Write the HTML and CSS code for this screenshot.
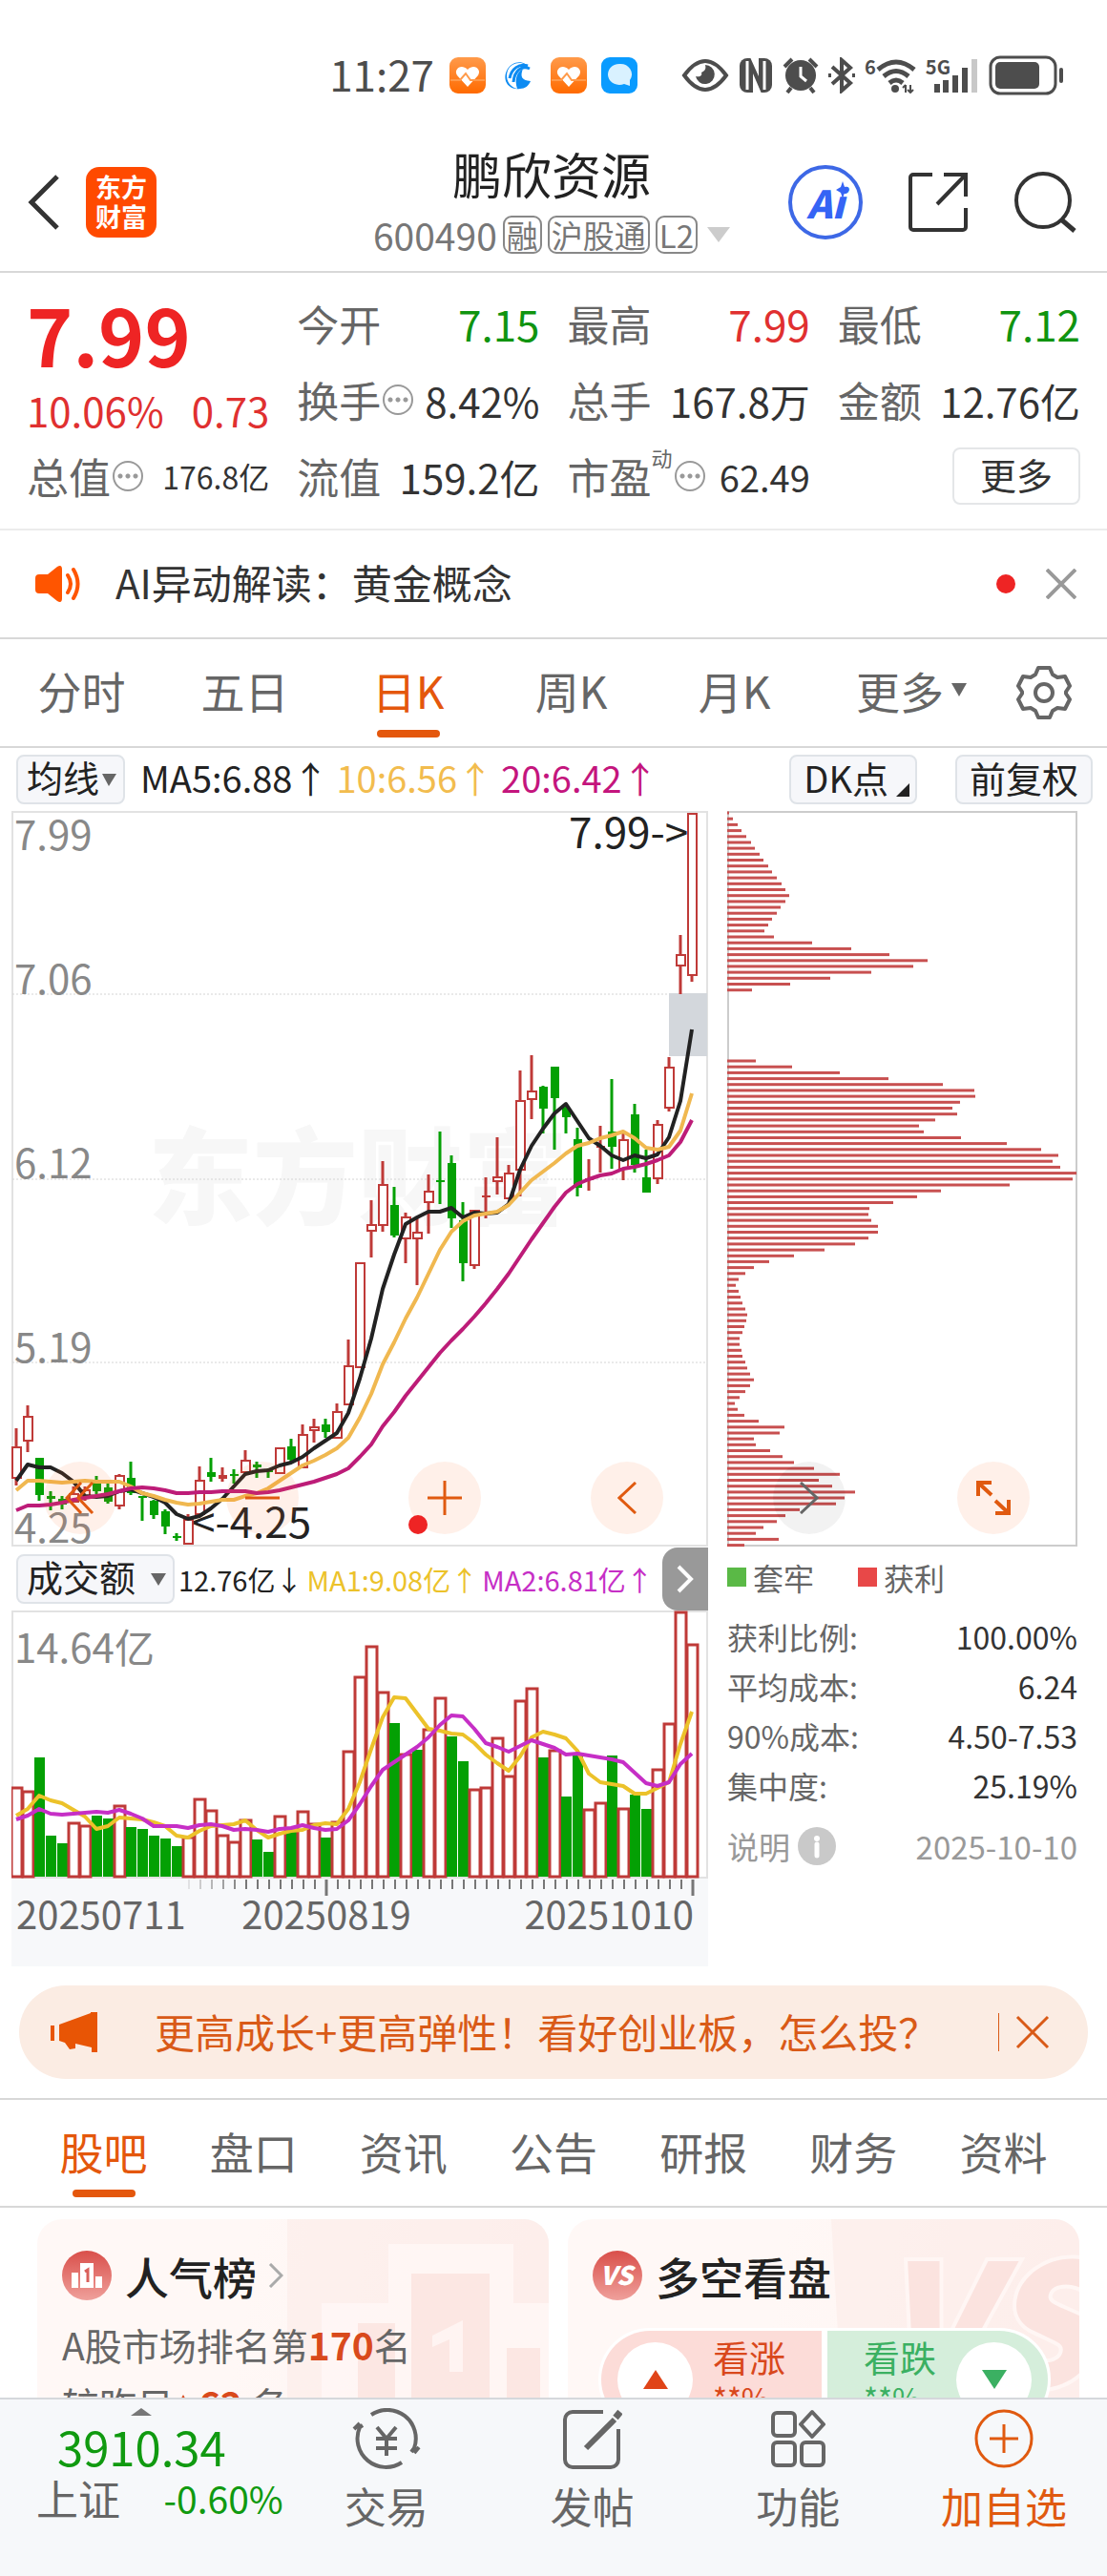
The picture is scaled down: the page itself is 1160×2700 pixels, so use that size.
FILE: index.html
```html
<!DOCTYPE html>
<html lang="zh-CN">
<head>
    <meta charset="UTF-8">
    <meta name="viewport" content="width=device-width, initial-scale=1.0">
    <title>鹏欣资源 600490</title>
    <link rel="stylesheet" href="styles.css">
</head>
<body>
<div class="app">
    <!-- Status bar -->
    <div class="status-bar">
        <span class="clock">11:27</span>
        <div class="status-apps">
            <svg width="38" height="38" viewBox="0 0 38 38">
                <defs><linearGradient id="orangeApp" x1="0" y1="0" x2="0" y2="1"><stop offset="0" stop-color="#ff9a4a"/><stop offset="1" stop-color="#ff6a00"/></linearGradient></defs>
                <rect width="38" height="38" rx="9" fill="url(#orangeApp)"/>
                <path d="M19 31 8 19c-4-6 4-13 11-6 7-7 15 0 11 6z" fill="#fff"/>
                <path d="M1 24h10l6-7 5 7h15" fill="none" stroke="#ff9a4a" stroke-width="2"/>
            </svg>
            <svg width="38" height="38" viewBox="0 0 38 38">
                <path d="M31 13C27 3 12 4 8 14c-3 8 1 17 10 19-3-9-1-17 6-21-3 8-2 12 8 13-2 5-6 8-11 8C9 35 2 24 7 14 12 3 27 2 31 13z" fill="#0d8bf2"/>
                <path d="M31 12c-8-4-16 2-17 14M29 9C20 6 12 12 10 22" fill="none" stroke="#0d8bf2" stroke-width="3"/>
            </svg>
            <svg width="38" height="38" viewBox="0 0 38 38">
                <rect width="38" height="38" rx="9" fill="url(#orangeApp)"/>
                <path d="M19 31 8 19c-4-6 4-13 11-6 7-7 15 0 11 6z" fill="#fff"/>
                <path d="M1 24h10l6-7 5 7h15" fill="none" stroke="#ff9a4a" stroke-width="2"/>
            </svg>
            <svg width="38" height="38" viewBox="0 0 38 38">
                <rect width="38" height="38" rx="9" fill="#0a9bff"/>
                <path d="M19 7a12 11 0 0 1 11 17v6l-6-2A12 11 0 1 1 19 7z" fill="#d9f1ff"/>
            </svg>
        </div>
        <div class="status-icons">
            <svg width="50" height="38" viewBox="0 0 50 38">
                <path d="M3 19Q25-11 47 19 25 49 3 19z" fill="none" stroke="#4d4d4d" stroke-width="4"/>
                <path d="M25 8c1 4 0 6-4 8 1 3-1 5-6 4a10 10 0 1 0 10-12z" fill="#4d4d4d"/>
            </svg>
            <svg width="36" height="38" viewBox="0 0 36 38">
                <rect x="1" y="1" width="34" height="36" rx="8" fill="#4d4d4d"/>
                <path d="M9 34V4M27 4v30" stroke="#fff" stroke-width="3"/>
                <path d="M15 17v21h9zM12 0h9v20z" fill="#fff"/>
            </svg>
            <svg width="38" height="38" viewBox="0 0 38 38">
                <path d="M2 10 10 2M36 10 28 2M9 32l-4 5M29 32l4 5" stroke="#4d4d4d" stroke-width="4" fill="none"/>
                <circle cx="19" cy="19" r="16" fill="#4d4d4d"/>
                <path d="M19 10v10l6 5" stroke="#fff" stroke-width="3" fill="none"/>
            </svg>
            <svg width="28" height="38" viewBox="0 0 28 38">
                <path d="M4 10l19 17-9 8V3l9 8L4 28M0 19h3M25 19h3" fill="none" stroke="#4d4d4d" stroke-width="4"/>
            </svg>
            <div class="network">
                <sup>6</sup>
                <svg width="42" height="38" viewBox="0 0 42 38">
                    <path d="M2 13q19-16 38 0M8 20q13-11 26 0M14 27q7-6 14 0" fill="none" stroke="#4d4d4d" stroke-width="5"/>
                    <circle cx="20" cy="33" r="4" fill="#4d4d4d"/>
                    <path d="M31 29v8M28 32l3-3M36 29v8M33 34l3 3 3-3" stroke="#4d4d4d" stroke-width="2" fill="none"/>
                </svg>
            </div>
            <div class="network">
                <sup>5G</sup>
                <svg class="signal" width="48" height="38" viewBox="0 0 48 38">
                    <path d="M4 28v9M13 24v13M23 19v18M33 11v26" stroke="#4d4d4d" stroke-width="6"/>
                    <path d="M43 2v35" stroke="#c8c8c8" stroke-width="6"/>
                </svg>
            </div>
            <svg width="80" height="42" viewBox="0 0 80 42">
                <rect x="2" y="2" width="68" height="38" rx="10" fill="none" stroke="#4d4d4d" stroke-width="3"/>
                <rect x="7" y="7" width="46" height="28" rx="5" fill="#4d4d4d"/>
                <path d="M76 15v12" stroke="#4d4d4d" stroke-width="4" stroke-linecap="round"/>
            </svg>
        </div>
    </div>

    <!-- Header -->
    <header class="header">
        <div class="header-left">
            <button class="icon-btn" aria-label="返回">
                <svg width="36" height="60" viewBox="0 0 36 60"><path d="M32 3 5 30l27 27" fill="none" stroke="#333" stroke-width="5"/></svg>
            </button>
            <a class="logo" href="#">东方<br>财富</a>
        </div>
        <div class="stock">
            <h1>鹏欣资源</h1>
            <div class="stock-code">
                <span>600490</span>
                <span class="tag">融</span>
                <span class="tag">沪股通</span>
                <span class="tag">L2</span>
                <svg width="24" height="16" viewBox="0 0 24 16"><path d="M0 0h24L12 16z" fill="#ccc"/></svg>
            </div>
        </div>
        <div class="header-right">
            <button class="icon-btn ai-btn" aria-label="AI助手">
                <span>Ai</span>
                <svg class="spark" width="14" height="18" viewBox="0 0 14 18"><path d="M7 0l2 6 5 3-5 3-2 6-2-6-5-3 5-3z" fill="#3564f5"/></svg>
            </button>
            <button class="icon-btn" aria-label="分享">
                <svg width="64" height="64" viewBox="0 0 64 64"><path d="M26 3H6a3 3 0 0 0-3 3v52a3 3 0 0 0 3 3h52a3 3 0 0 0 3-3V38M38 3h23v23M61 3 31 34" fill="none" stroke="#333" stroke-width="4"/></svg>
            </button>
            <button class="icon-btn" aria-label="搜索">
                <svg width="66" height="66" viewBox="0 0 66 66"><circle cx="31" cy="31" r="28" fill="none" stroke="#333" stroke-width="4"/><path d="M50 51l14 12" stroke="#333" stroke-width="5"/></svg>
            </button>
        </div>
    </header>

    <!-- Quote -->
    <section class="quote">
        <div class="price-box">
            <div class="price">7.99</div>
            <div class="change"><span>10.06%</span><span>0.73</span></div>
        </div>
        <div class="cell"><span>今开</span><b class="green">7.15</b></div>
        <div class="cell"><span>最高</span><b class="red">7.99</b></div>
        <div class="cell"><span>最低</span><b class="green">7.12</b></div>
        <div class="cell"><span>换手<i class="dots"></i></span><b>8.42%</b></div>
        <div class="cell"><span>总手</span><b>167.8万</b></div>
        <div class="cell"><span>金额</span><b>12.76亿</b></div>
        <div class="cell"><span>总值<i class="dots"></i></span><b class="small">176.8亿</b></div>
        <div class="cell"><span>流值</span><b>159.2亿</b></div>
        <div class="cell"><span>市盈<sup>动</sup><i class="dots"></i></span><b class="mid">62.49</b></div>
        <div class="cell cell-end"><button class="more-btn">更多</button></div>
    </section>

    <!-- AI notice -->
    <div class="notice">
        <svg width="50" height="40" viewBox="0 0 50 40">
            <path d="M0 14q0-4 4-4h9L23 2q5-3 5 3v30q0 6-5 3l-10-8H4q-4 0-4-4z" fill="#ff5500"/>
            <path d="M34 11q6 9 0 18M40 5q9 15 0 30" fill="none" stroke="#ff5500" stroke-width="4" stroke-linecap="round"/>
        </svg>
        <span class="notice-text">AI异动解读：黄金概念</span>
        <i class="dot"></i>
        <button class="icon-btn" aria-label="关闭">
            <svg width="32" height="32" viewBox="0 0 32 32"><path d="M1 1l30 30M31 1 1 31" stroke="#999" stroke-width="4"/></svg>
        </button>
    </div>

    <!-- Period tabs -->
    <nav class="period-tabs">
        <a href="#">分时</a>
        <a href="#">五日</a>
        <a href="#" class="active">日K</a>
        <a href="#">周K</a>
        <a href="#">月K</a>
        <a href="#">更多<svg width="16" height="14" viewBox="0 0 16 14"><path d="M0 0h16L8 14z" fill="#666"/></svg></a>
        <button class="icon-btn" aria-label="设置">
            <svg width="58" height="58" viewBox="0 0 58 58">
                <path d="M23 3h12l3 7 5 3 8-1 5 10-4 6v2l4 6-5 10-8-1-5 3-3 7H23l-3-7-5-3-8 1L2 36l4-6v-2l-4-6L7 12l8 1 5-3z" fill="none" stroke="#666" stroke-width="4" stroke-linejoin="round"/>
                <circle cx="29" cy="29" r="9" fill="none" stroke="#666" stroke-width="4"/>
            </svg>
        </button>
    </nav>

    <!-- MA toolbar -->
    <div class="ma-bar">
        <div class="select-box">
            <select aria-label="主图指标"><option>均线</option></select>
            <svg width="15" height="13" viewBox="0 0 15 13"><path d="M0 0h15L7 13z" fill="#666"/></svg>
        </div>
        <span>MA5:6.88↑</span>
        <span class="yellow">10:6.56↑</span>
        <span class="magenta">20:6.42↑</span>
        <div class="ma-actions">
            <button class="tool-btn">DK点<svg width="14" height="14" viewBox="0 0 14 14"><path d="M14 0v14H0z" fill="#222"/></svg></button>
            <button class="tool-btn">前复权</button>
        </div>
    </div>

    <!-- Charts -->
    <div class="charts">
        <div class="chart-main">
            <div class="chart-wrap">
                <svg id="kline" viewBox="0 0 730 772"></svg>
                <div class="float-btns">
                    <button aria-label="最早"><svg width="32" height="34" viewBox="0 0 32 34"><path d="M17 1 2 17l15 16M29 1 14 17l15 16" fill="none" stroke="#e05a10" stroke-width="3"/></svg></button>
                    <button aria-label="缩小"><svg width="36" height="34" viewBox="0 0 36 34"><path d="M0 17h36" stroke="#e05a10" stroke-width="3"/></svg></button>
                    <button aria-label="放大" class="has-dot"><svg width="36" height="36" viewBox="0 0 36 36"><path d="M0 18h36M18 0v36" stroke="#e05a10" stroke-width="3"/></svg></button>
                    <button aria-label="向左"><svg width="20" height="34" viewBox="0 0 20 34"><path d="M19 1 2 17l17 16" fill="none" stroke="#e05a10" stroke-width="3"/></svg></button>
                </div>
            </div>
            <div class="vol-bar">
                <div class="select-box wide">
                    <select aria-label="副图指标"><option>成交额</option></select>
                    <svg width="16" height="13" viewBox="0 0 16 13"><path d="M0 0h16L8 13z" fill="#666"/></svg>
                </div>
                <span>12.76亿↓</span>
                <span class="gold">MA1:9.08亿↑</span>
                <span class="purple">MA2:6.81亿↑</span>
                <button class="fold-btn" aria-label="展开"><svg width="18" height="30" viewBox="0 0 18 30"><path d="M2 2l13 13L2 28" fill="none" stroke="#fff" stroke-width="4"/></svg></button>
            </div>
            <svg id="volume" viewBox="0 0 730 373"></svg>
        </div>
        <div class="chart-side">
            <div class="chart-wrap">
                <svg id="chips" viewBox="0 0 367 772"></svg>
                <div class="float-btns side">
                    <button aria-label="向右" class="gray"><svg width="20" height="34" viewBox="0 0 20 34"><path d="M1 1l17 16L1 33" fill="none" stroke="#666" stroke-width="3"/></svg></button>
                    <button aria-label="全屏"><svg width="38" height="38" viewBox="0 0 38 38"><path d="M17 3H3v14M3 3l14 13M21 35h14V21M35 35 21 22" fill="none" stroke="#e05a10" stroke-width="4"/></svg></button>
                </div>
            </div>
            <div class="legend">
                <span><i class="sq-green"></i>套牢</span>
                <span><i class="sq-red"></i>获利</span>
            </div>
            <dl class="chip-info">
                <div><dt>获利比例:</dt><dd>100.00%</dd></div>
                <div><dt>平均成本:</dt><dd>6.24</dd></div>
                <div><dt>90%成本:</dt><dd>4.50-7.53</dd></div>
                <div><dt>集中度:</dt><dd>25.19%</dd></div>
            </dl>
            <div class="chip-date">
                <a href="#">说明<svg width="40" height="40" viewBox="0 0 40 40"><circle cx="20" cy="20" r="20" fill="#c9c9c9"/><circle cx="20" cy="12" r="3" fill="#fff"/><path d="M20 18v12" stroke="#fff" stroke-width="5" stroke-linecap="round"/></svg></a>
                <time>2025-10-10</time>
            </div>
        </div>
    </div>

    <!-- Promo -->
    <div class="promo">
        <svg width="50" height="44" viewBox="0 0 50 44"><path d="M0 15h4v16H0zM9 14 42 2V1h7v42h-6v-5l-17-4v5l-6 1-5-7-6-2z" fill="#e85505"/></svg>
        <a href="#">更高成长+更高弹性！看好创业板，怎么投？</a>
        <button class="icon-btn" aria-label="关闭推广">
            <svg width="36" height="36" viewBox="0 0 36 36"><path d="M2 2l32 32M34 2 2 34" stroke="#d95a17" stroke-width="3"/></svg>
        </button>
    </div>

    <!-- Info tabs -->
    <nav class="info-tabs">
        <a href="#" class="active">股吧</a>
        <a href="#">盘口</a>
        <a href="#">资讯</a>
        <a href="#">公告</a>
        <a href="#">研报</a>
        <a href="#">财务</a>
        <a href="#">资料</a>
    </nav>

    <!-- Cards -->
    <div class="cards">
        <section class="card">
            <svg class="card-bg" viewBox="0 0 536 240" width="536" height="240">
                <path d="M262 0h274v240H262z" fill="#fce9e6" opacity=".5"/>
                <path d="M298 240V88h70V26h131v62h37v152z" fill="#fff8f6" opacity=".8"/>
                <path d="M336 109h39v131h-39zM392 57h82v183h-82zM492 135h35v105h-35z" fill="#fbe3df" opacity=".8"/>
                <path d="M414 122l32-16v54h-14v-34l-18 8z" fill="#fff4f2"/>
            </svg>
            <h2>
                <svg width="52" height="52" viewBox="0 0 52 52">
                    <defs><linearGradient id="redIcon" x1="0" y1="0" x2="0" y2="1"><stop offset="0" stop-color="#d94f4a"/><stop offset="1" stop-color="#efa09b"/></linearGradient></defs>
                    <circle cx="26" cy="26" r="26" fill="url(#redIcon)"/>
                    <path d="M10 23h7v16h-7zM19 13h14v26H19zM35 27h7v12h-7z" fill="#fff"/>
                    <path d="M24 22l3-2v13" fill="none" stroke="#d9605b" stroke-width="3"/>
                </svg>
                人气榜
                <svg width="16" height="26" viewBox="0 0 16 26"><path d="M2 1l12 12L2 25" fill="none" stroke="#aaa" stroke-width="3"/></svg>
            </h2>
            <p>A股市场排名第<strong>170</strong>名</p>
            <p>较昨日<strong><svg width="20" height="18" viewBox="0 0 20 18"><path d="M10 0l10 18H0z" fill="#d94a1c"/></svg>62</strong>&nbsp;名</p>
        </section>
        <section class="card">
            <svg class="card-bg" viewBox="0 0 536 240" width="536" height="240">
                <path d="M276 0h260v240H290z" fill="#fce9e6" opacity=".5"/>
                <text x="325" y="175" font-size="176" font-weight="900" font-style="italic" fill="#fbe3df" stroke="#fff6f4" stroke-width="8" paint-order="stroke">VS</text>
            </svg>
            <h2>
                <svg width="52" height="52" viewBox="0 0 52 52"><circle cx="26" cy="26" r="26" fill="url(#redIcon)"/><text x="25" y="36" text-anchor="middle" font-size="27" font-weight="900" font-style="italic" fill="#fff">VS</text></svg>
                多空看盘
            </h2>
            <div class="vote">
                <button class="vote-up">
                    <i><svg width="26" height="20" viewBox="0 0 26 20"><path d="M13 0l13 20H0z" fill="#e04418"/></svg></i>
                    <span>看涨<small>**%</small></span>
                </button>
                <button class="vote-down">
                    <span>看跌<small>**%</small></span>
                    <i><svg width="26" height="20" viewBox="0 0 26 20"><path d="M0 0h26L13 20z" fill="#3bb062"/></svg></i>
                </button>
            </div>
        </section>
    </div>

    <!-- Bottom bar -->
    <footer class="bottom-bar">
        <a class="index" href="#">
            <svg width="22" height="8" viewBox="0 0 22 8"><path d="M11 0l11 8H0z" fill="#777"/></svg>
            <span class="index-value">3910.34</span>
            <span class="index-row"><span>上证</span><em>-0.60%</em></span>
        </a>
        <a href="#">
            <svg width="72" height="64" viewBox="0 0 72 64" fill="none" stroke="#666" stroke-width="4">
                <path d="M20 7A30 30 0 0 1 65 42l-3 4M65 47l5-6M52 57A30 30 0 0 1 8 20l3-2M8 16l-6 6M26 20l10 12 10-12M25 32h22M25 42h22M36 32v18"/>
            </svg>
            交易
        </a>
        <a href="#">
            <svg width="64" height="64" viewBox="0 0 64 64" fill="none" stroke="#666" stroke-width="4">
                <path d="M44 4H12a8 8 0 0 0-8 8v42a8 8 0 0 0 8 8h40a8 8 0 0 0 8-8V22"/><path d="M26 42 56 12" stroke-width="6"/><path d="M57 10l5-6" stroke-width="7"/>
            </svg>
            发帖
        </a>
        <a href="#">
            <svg width="60" height="64" viewBox="0 0 60 64" fill="none" stroke="#666" stroke-width="4">
                <rect x="4" y="5" width="23" height="24" rx="4"/><rect x="4" y="36" width="23" height="24" rx="4"/><rect x="34" y="36" width="23" height="24" rx="4"/><path d="M45 4l12 13-12 13-12-13z" stroke-linejoin="round"/>
            </svg>
            功能
        </a>
        <a href="#" class="add">
            <svg width="64" height="64" viewBox="0 0 64 64" fill="none" stroke="#e05a10" stroke-width="3"><circle cx="32" cy="32" r="29"/><path d="M17 32h30M32 17v30"/></svg>
            加自选
        </a>
    </footer>
</div>
<script src="script.js"></script>
</body>
</html>
```
FILE: styles.css
```css
* {
    margin: 0;
    padding: 0;
    box-sizing: border-box;
}
body {
    font-family: "Noto Sans CJK SC", "Noto Sans", sans-serif;
    background-color: #fff;
    color: #333;
}
a {
    color: inherit;
    text-decoration: none;
}
button, select {
    font: inherit;
    color: inherit;
    background: none;
    border: none;
    cursor: pointer;
}
svg {
    display: block;
    flex: none;
}
i, em {
    font-style: normal;
}
.app {
    height: 100vh;
    display: flex;
    flex-direction: column;
    overflow: hidden;
}
.app > * {
    flex: none;
}
.icon-btn {
    display: flex;
    align-items: center;
    justify-content: center;
}

/* Status bar */
.status-bar {
    display: flex;
    align-items: center;
    justify-content: flex-end;
    padding: 46px 44px 0 0;
    height: 112px;
    color: #4d4d4d;
}
.clock {
    font-size: 44px;
    line-height: 62px;
    padding-bottom: 4px;
    margin-right: 16px;
}
.status-apps {
    display: flex;
    gap: 15px;
    margin-right: 46px;
}
.status-icons {
    display: flex;
    align-items: center;
    gap: 10px;
}
.network {
    display: flex;
    align-items: flex-start;
}
.network sup {
    font-size: 20px;
    line-height: 20px;
    font-weight: bold;
}
.network .signal {
    margin-left: -18px;
}

/* Header */
.header {
    display: grid;
    grid-template-columns: 1fr auto 1fr;
    align-items: center;
    height: 174px;
    padding: 28px 32px 0 28px;
    border-bottom: 2px solid #d8d8d8;
}
.header-left {
    display: flex;
    align-items: center;
    gap: 26px;
}
.logo {
    width: 74px;
    height: 74px;
    border-radius: 14px;
    background-color: #ff4a00;
    color: #fff;
    font-size: 27px;
    line-height: 31px;
    font-weight: bold;
    text-align: center;
    padding-top: 5px;
}
.stock {
    text-align: center;
    padding-top: 4px;
}
.stock h1 {
    font-size: 52px;
    line-height: 64px;
    font-weight: normal;
    color: #222;
}
.stock-code {
    display: flex;
    align-items: center;
    justify-content: center;
    gap: 6px;
    height: 64px;
    font-size: 39px;
    color: #777;
}
.tag {
    border: 2px solid #888;
    border-radius: 9px;
    font-size: 33px;
    line-height: 36px;
    padding: 0 2px;
}
.stock-code svg {
    margin-left: 4px;
}
.header-right {
    display: flex;
    align-items: center;
    justify-content: flex-end;
    gap: 47px;
}
.ai-btn {
    position: relative;
    width: 78px;
    height: 78px;
    border: 4px solid #3d68e6;
    border-radius: 50%;
    color: #3564f5;
    font-size: 40px;
    line-height: 60px;
    font-weight: 900;
    font-style: italic;
}
.spark {
    position: absolute;
    top: 13px;
    right: 10px;
}

/* Quote */
.quote {
    display: grid;
    grid-template-columns: repeat(4, 1fr);
    grid-template-rows: repeat(3, 80px);
    column-gap: 29px;
    padding: 13px 28px 15px;
    border-bottom: 2px solid #ececec;
}
.price-box {
    grid-row: span 2;
    color: #e03030;
}
.price {
    font-size: 82px;
    line-height: 102px;
    font-weight: bold;
    color: #ee2424;
}
.change {
    display: flex;
    justify-content: space-between;
    font-size: 42px;
    line-height: 58px;
}
.cell {
    display: flex;
    align-items: center;
    justify-content: space-between;
    white-space: nowrap;
    font-size: 44px;
    color: #666;
}
.cell > span {
    display: flex;
    align-items: center;
}
.cell b {
    font-size: 42px;
    font-weight: normal;
    color: #333;
}
.cell b.mid {
    font-size: 38px;
}
.cell b.small {
    font-size: 32px;
}
.cell b.green, .cell b.red {
    font-size: 44px;
}
.cell b.green {
    color: #109410;
}
.cell b.red {
    color: #e03030;
}
.cell sup {
    font-size: 22px;
    line-height: 24px;
    align-self: flex-start;
}
.cell-end {
    justify-content: flex-end;
}
.dots {
    width: 32px;
    height: 32px;
    margin: 0 2px;
    border: 2px solid #999;
    border-radius: 50%;
    background: radial-gradient(circle, #999 2px, transparent 3px) center / 8px 8px repeat-x;
    background-clip: content-box;
    padding: 0 2px;
}
.more-btn {
    border: 2px solid #e4e6e8;
    border-radius: 8px;
    height: 60px;
    padding: 0 27px 4px;
    font-size: 38px;
    line-height: 52px;
    color: #333;
}

/* Notice */
.notice {
    display: flex;
    align-items: center;
    height: 114px;
    padding: 0 32px 0 37px;
    border-bottom: 2px solid #d8d8d8;
}
.notice-text {
    flex: 1;
    margin-left: 34px;
    padding-bottom: 6px;
    font-size: 42px;
}
.dot {
    width: 20px;
    height: 20px;
    border-radius: 50%;
    background-color: #ee2424;
    margin-right: 32px;
}

/* Tabs */
.period-tabs, .info-tabs {
    display: grid;
    font-size: 46px;
    color: #666;
    border-bottom: 2px solid #d8d8d8;
}
.period-tabs {
    grid-template-columns: repeat(5, 171fr) 200fr 78fr;
    height: 114px;
    padding-right: 27px;
}
.info-tabs {
    grid-template-columns: repeat(7, 1fr);
    height: 115px;
    padding: 0 30px;
    border-top: 2px solid #d8d8d8;
}
.period-tabs a, .info-tabs a {
    position: relative;
    display: flex;
    align-items: center;
    justify-content: center;
    gap: 8px;
    padding-bottom: 6px;
}
.period-tabs .active, .info-tabs .active {
    color: #e4570c;
}
.active::after {
    content: "";
    position: absolute;
    bottom: 9px;
    left: 50%;
    width: 66px;
    height: 8px;
    margin-left: -33px;
    border-radius: 4px;
    background-color: #e4570c;
}

/* MA toolbar */
.ma-bar {
    display: flex;
    align-items: center;
    gap: 8px;
    height: 66px;
    padding: 0 15px 0 17px;
    font-size: 38px;
    color: #222;
}
.ma-bar > span {
    padding-bottom: 6px;
}
.select-box, .tool-btn {
    display: flex;
    align-items: center;
    height: 52px;
    border: 2px solid #dfe3e8;
    border-radius: 8px;
    background-color: #f6f7fa;
    line-height: 44px;
}
.select-box {
    gap: 2px;
    padding: 0 7px 0 9px;
    margin-right: 8px;
    font-size: 38px;
    color: #222;
}
.select-box select {
    appearance: none;
    padding-bottom: 6px;
}
.select-box.wide {
    gap: 15px;
    margin-right: 0;
}
.yellow {
    color: #f2bc4e;
}
.magenta {
    color: #c4157d;
}
.ma-actions {
    display: flex;
    gap: 40px;
    margin-left: auto;
}
.tool-btn {
    padding: 0 13px 4px;
}
.tool-btn svg {
    align-self: flex-end;
    margin: 0 -7px 2px 8px;
}

/* Charts */
.charts {
    display: grid;
    grid-template-columns: 730fr 367fr;
    column-gap: 20px;
    padding: 0 31px 0 12px;
}
.charts > div {
    min-width: 0;
}
.chart-wrap {
    position: relative;
}
#kline, #volume, #chips {
    width: 100%;
    height: auto;
}
.grid-label {
    font-size: 42px;
    fill: #888;
}
.mark-label {
    font-size: 44px;
    fill: #222;
}
.axis-label {
    font-size: 40px;
    fill: #666;
}
.watermark {
    font-size: 110px;
    font-weight: 900;
    fill: #f7f7f7;
}
.float-btns {
    position: absolute;
    left: 34px;
    right: 47px;
    bottom: 14px;
    display: flex;
    justify-content: space-between;
}
.float-btns.side {
    left: 48px;
    right: 50px;
}
.float-btns button {
    position: relative;
    display: flex;
    align-items: center;
    justify-content: center;
    width: 76px;
    height: 76px;
    border-radius: 50%;
    background-color: rgba(255, 110, 40, 0.1);
}
.float-btns .gray {
    background-color: rgba(0, 0, 0, 0.05);
}
.has-dot::after {
    content: "";
    position: absolute;
    left: 0;
    bottom: 0;
    width: 20px;
    height: 20px;
    border-radius: 50%;
    background-color: #ee2424;
}
.vol-bar {
    display: flex;
    align-items: center;
    gap: 4px;
    height: 66px;
    padding-left: 5px;
    font-size: 29px;
    white-space: nowrap;
    color: #222;
}
.gold {
    color: #ecc22a;
}
.purple {
    color: #c62fc6;
}
.fold-btn {
    display: flex;
    align-items: center;
    justify-content: center;
    width: 48px;
    height: 66px;
    margin-left: auto;
    border-radius: 16px 0 0 16px;
    background-color: #999;
}
.legend {
    display: flex;
    align-items: center;
    gap: 46px;
    height: 62px;
    font-size: 32px;
    color: #666;
}
.legend span {
    display: flex;
    align-items: center;
    gap: 7px;
}
.legend i {
    width: 20px;
    height: 20px;
}
.sq-green {
    background-color: #5ab946;
}
.sq-red {
    background-color: #e84848;
}
.chip-info {
    padding-top: 5px;
    font-size: 32px;
    line-height: 52px;
}
.chip-info div, .chip-date {
    display: flex;
    justify-content: space-between;
}
.chip-info dt {
    color: #666;
}
.chip-date {
    align-items: center;
    height: 76px;
    font-size: 33px;
    color: #999;
}
.chip-date a {
    display: flex;
    align-items: center;
    gap: 8px;
}

/* Promo */
.promo {
    display: flex;
    align-items: center;
    height: 98px;
    margin: 20px;
    padding: 0 40px 0 33px;
    border-radius: 49px;
    background-color: #fbece3;
    color: #d95a17;
    font-size: 42px;
}
.promo a {
    flex: 1;
    margin-left: 59px;
    padding-bottom: 4px;
    white-space: nowrap;
}
.promo .icon-btn {
    height: 40px;
    padding-left: 17px;
    border-left: 1px solid #d95a17;
}

/* Cards */
.app > .cards {
    flex: 1;
    min-height: 0;
    overflow: hidden;
    display: grid;
    grid-template-columns: 1fr 1fr;
    align-items: start;
    gap: 20px;
    padding: 12px 29px 0 39px;
}
.card {
    position: relative;
    height: 240px;
    padding: 26px;
    border-radius: 26px;
    background: linear-gradient(100deg, #fff8f6 40%, #fef2f0);
    overflow: hidden;
}
.card > * {
    position: relative;
}
.card .card-bg {
    position: absolute;
    top: 0;
    right: 0;
}
.card h2 {
    display: flex;
    align-items: center;
    gap: 14px;
    height: 66px;
    font-size: 46px;
    line-height: 56px;
    font-weight: 500;
    color: #222;
}
.card h2 svg:last-child:not(:first-child) {
    margin-left: -2px;
}
.card p {
    display: flex;
    align-items: center;
    height: 62px;
    font-size: 39px;
    color: #666;
}
.card h2 + p {
    margin-top: 8px;
}
.card strong {
    display: flex;
    align-items: center;
    gap: 6px;
    color: #d94a1c;
}
.vote {
    display: flex;
    gap: 6px;
    height: 108px;
    margin: 22px 4px 0 6px;
    border-radius: 54px;
    border: 3px solid #fff;
    background-color: #fff;
    overflow: hidden;
}
.vote button {
    flex: 1;
    display: flex;
    align-items: center;
    justify-content: space-between;
    text-align: left;
    padding: 0 17px;
}
.vote i {
    display: flex;
    align-items: center;
    justify-content: center;
    width: 79px;
    height: 79px;
    border-radius: 50%;
    background-color: #fff;
}
.vote span {
    font-size: 38px;
    line-height: 46px;
    padding-bottom: 8px;
}
.vote small {
    display: block;
    font-size: 32px;
    line-height: 40px;
}
.vote .vote-up {
    background-color: #fcdcd8;
    color: #d9481c;
    padding-right: 38px;
}
.vote .vote-down {
    background-color: #d5eedb;
    color: #3bb062;
    padding-left: 38px;
}

/* Bottom bar */
.bottom-bar {
    display: grid;
    grid-template-columns: 297fr repeat(4, 216fr);
    height: 187px;
    padding-top: 9px;
    border-top: 2px solid #d5d8dc;
    background-color: #f6f8fa;
    font-size: 44px;
    line-height: 60px;
    color: #666;
}
.bottom-bar a {
    display: flex;
    flex-direction: column;
    align-items: center;
    gap: 8px;
}
.bottom-bar .add {
    color: #e05a10;
}
.bottom-bar .index {
    gap: 0;
}
.index-value {
    font-size: 49px;
    line-height: 56px;
    margin-top: 4px;
    color: #109a10;
}
.index-row {
    display: flex;
    justify-content: space-between;
    width: 100%;
    padding-left: 38px;
    line-height: 52px;
}
.index-row em {
    font-size: 39px;
    color: #109a10;
}
```
FILE: script.js
```javascript
const RED = '#bf3a38';
const GREEN = '#04a004';
const STEP = 12;

// [high, body top, body bottom, low, direction], y inside the chart
const candles = [
    [647, 666, 700, 707, 'r'], [623, 634, 661, 672, 'r'], [678, 678, 717, 723, 'g'], [713, 718, 721, 733, 'g'],
    [718, 721, 727, 732, 'g'], [708, 715, 725, 725, 'r'], [708, 711, 720, 723, 'r'], [697, 703, 713, 716, 'g'],
    [705, 709, 724, 726, 'g'], [695, 696, 729, 732, 'r'], [682, 699, 715, 717, 'g'], [718, 718, 720, 744, 'g'],
    [722, 723, 738, 742, 'g'], [732, 734, 750, 758, 'g'], [757, 760, 762, 765, 'g'], [737, 742, 769, 769, 'r'],
    [687, 701, 738, 738, 'r'], [678, 693, 698, 703, 'g'], [688, 696, 700, 703, 'r'], [690, 695, 697, 705, 'g'],
    [670, 680, 694, 694, 'r'], [682, 685, 688, 699, 'g'], [689, 691, 693, 699, 'g'], [667, 667, 695, 695, 'r'],
    [658, 666, 680, 683, 'g'], [643, 653, 689, 689, 'r'], [637, 645, 650, 662, 'r'], [637, 643, 651, 657, 'g'],
    [621, 629, 658, 658, 'r'], [554, 581, 623, 623, 'r'], [473, 473, 584, 584, 'r'], [408, 433, 441, 468, 'r'],
    [367, 391, 435, 441, 'r'], [394, 413, 445, 447, 'g'], [421, 425, 449, 474, 'r'], [426, 441, 449, 497, 'r'],
    [381, 398, 411, 443, 'r'], [336, 387, 389, 412, 'g'], [361, 369, 427, 437, 'g'], [410, 429, 474, 493, 'g'],
    [418, 418, 477, 480, 'r'], [384, 403, 405, 427, 'r'], [342, 383, 389, 402, 'r'], [371, 379, 407, 407, 'r'],
    [272, 303, 377, 404, 'r'], [256, 293, 303, 323, 'r'], [288, 289, 312, 338, 'g'], [268, 268, 301, 355, 'g'],
    [307, 311, 321, 338, 'g'], [332, 344, 395, 404, 'g'], [365, 385, 387, 398, 'r'], [330, 351, 353, 379, 'r'],
    [281, 336, 352, 375, 'g'], [337, 344, 376, 387, 'r'], [307, 318, 371, 379, 'g'], [355, 384, 400, 400, 'g'],
    [324, 328, 386, 391, 'r'], [258, 268, 312, 315, 'r'], [130, 150, 163, 192, 'r'], [2, 2, 173, 179, 'r']
];
const ma5 = [702, 685, 688, 688, 694, 703, 718, 719, 718, 713, 711, 715, 719, 725, 737, 742, 739, 731, 721, 708, 695, 692, 691, 686, 683, 677, 668, 660, 652, 631, 595, 553, 501, 465, 433, 426, 420, 420, 416, 426, 421, 422, 421, 412, 376, 351, 333, 317, 307, 325, 343, 351, 361, 366, 361, 364, 360, 342, 304, 229];
const ma10 = [712, 702, 702, 703, 704, 703, 702, 703, 703, 703, 708, 715, 718, 722, 725, 727, 726, 724, 722, 722, 718, 715, 710, 702, 694, 686, 681, 675, 668, 657, 636, 611, 580, 557, 532, 510, 485, 460, 441, 430, 424, 422, 420, 413, 400, 387, 378, 369, 359, 351, 348, 343, 340, 336, 343, 353, 355, 352, 335, 296];
const ma20 = [733, 728, 728, 727, 725, 722, 720, 718, 716, 713, 710, 709, 710, 712, 715, 715, 714, 714, 713, 713, 713, 715, 714, 712, 709, 706, 703, 699, 695, 689, 677, 664, 645, 630, 613, 598, 583, 568, 555, 543, 530, 516, 501, 485, 467, 449, 432, 415, 400, 391, 386, 382, 380, 375, 373, 370, 366, 361, 347, 324];

// Turnover bars and their averages, as heights
const volumes = [94, 90, 125, 43, 35, 57, 54, 64, 61, 75, 52, 50, 43, 40, 32, 42, 82, 70, 44, 37, 60, 39, 26, 64, 48, 69, 56, 41, 58, 132, 210, 242, 194, 161, 129, 133, 155, 188, 147, 121, 92, 94, 146, 106, 185, 198, 125, 133, 84, 128, 71, 78, 127, 72, 86, 71, 113, 161, 278, 244];
const volumeColors = 'rrgggrrggrgggggrrrrrrggrgrrgrrrrrgrgrrggrrrrrrgrggrrgrggrrrr';
const volMa1 = [64, 71, 85, 80, 77, 70, 63, 50, 53, 62, 61, 60, 57, 53, 43, 41, 48, 53, 54, 55, 59, 49, 41, 45, 48, 49, 54, 56, 55, 71, 99, 134, 167, 188, 187, 171, 155, 153, 150, 149, 140, 128, 119, 111, 126, 146, 152, 149, 145, 132, 108, 99, 97, 95, 87, 87, 93, 99, 139, 173];
const volMa2 = [60, 64, 71, 66, 65, 66, 67, 68, 67, 70, 66, 61, 53, 53, 53, 51, 54, 55, 53, 49, 50, 49, 47, 50, 51, 54, 51, 49, 50, 59, 76, 95, 112, 120, 128, 136, 146, 159, 169, 168, 155, 140, 136, 131, 137, 143, 139, 135, 128, 129, 127, 125, 123, 120, 109, 98, 95, 99, 118, 129];

// Chip distribution, 0 = empty price level
const chips = [2, 6, 11, 15, 20, 25, 29, 34, 38, 43, 47, 52, 57, 61, 65, 61, 56, 52, 47, 43, 39, 49, 89, 130, 170, 210, 195, 151, 108, 66, 26,
    0, 0, 0, 0, 0, 0, 0, 0, 0, 0, 0,
    30, 68, 118, 169, 226, 259, 260, 244, 236, 241, 218, 201, 206, 245, 293, 329, 347, 341, 349, 366, 362, 296, 224, 199, 174, 149, 148, 151, 158, 158, 148, 134, 102, 70, 44, 28, 19, 12, 9, 12, 14, 16, 19, 21, 20, 18, 16, 13, 13, 15, 16, 19, 21, 24, 28, 24, 19, 13, 8, 11, 18, 33, 60, 55, 28, 30, 45, 58, 70, 91, 118, 96, 110, 134, 123, 114, 76, 61, 52, 38, 30, 54, 18];

function xAt(i) {
    return 5 + i * STEP;
}

function polyline(values, color) {
    const points = values.map((y, i) => `${xAt(i)},${y}`).join(' ');
    return `<polyline points="${points}" fill="none" stroke="${color}" stroke-width="4" stroke-linejoin="round"/>`;
}

function drawKline() {
    let html = '<text class="watermark" x="143" y="425">东方财富</text>';
    html += '<rect x="1" y="1" width="728" height="769" fill="none" stroke="#e2e2e2" stroke-width="2"/>';
    [192, 386, 578].forEach(y => {
        html += `<path d="M1 ${y}H729" stroke="#d4d4d4" stroke-dasharray="2 2"/>`;
    });
    html += '<rect x="689" y="191" width="40" height="66" fill="#d3d7dc"/>';
    [['7.99', 41], ['7.06', 192], ['6.12', 385], ['5.19', 578], ['4.25', 767]].forEach(([text, y]) => {
        html += `<text class="grid-label" x="3" y="${y}">${text}</text>`;
    });

    candles.forEach(([high, top, bottom, low, dir], i) => {
        const x = xAt(i);
        const color = dir === 'r' ? RED : GREEN;
        html += `<path d="M${x} ${high}V${top}M${x} ${bottom}V${low}" stroke="${color}" stroke-width="3"/>`;
        if (dir === 'r' && bottom - top > 4) {
            html += `<rect x="${x - 4}" y="${top + 1}" width="9" height="${bottom - top - 2}" fill="#fff" stroke="${color}" stroke-width="2"/>`;
        } else {
            html += `<rect x="${x - 4}" y="${top}" width="9" height="${bottom - top}" fill="${color}"/>`;
        }
    });

    html += polyline(ma5, '#222') + polyline(ma10, '#f0b850') + polyline(ma20, '#bd1c78');
    html += '<text class="mark-label" x="584" y="39">7.99-&gt;</text>';
    html += '<text class="mark-label" x="189" y="762">&lt;-4.25</text>';
    document.getElementById('kline').innerHTML = html;
}

function drawVolume() {
    const base = 279;
    let html = '<rect x="0" y="281" width="730" height="92" fill="#f7f8fa"/>';
    html += '<rect x="1" y="1" width="728" height="279" fill="none" stroke="#e2e2e2" stroke-width="2"/>';
    html += '<text class="grid-label" x="3" y="55">14.64亿</text>';

    volumes.forEach((h, i) => {
        const x = xAt(i);
        if (volumeColors[i] === 'r') {
            html += `<rect x="${x - 5}" y="${base - h + 1}" width="11" height="${h - 1}" fill="#fff" stroke="${RED}" stroke-width="3"/>`;
        } else {
            html += `<rect x="${x - 5}" y="${base - h}" width="11" height="${h}" fill="${GREEN}"/>`;
        }
    });
    html += polyline(volMa1.map(h => base - h), '#ecc22a');
    html += polyline(volMa2.map(h => base - h), '#c62fc6');

    // Day ticks, the labelled days are longer
    for (let i = 15; i < volumes.length; i++) {
        const major = i === 27 || i === 59;
        const opacity = Math.min(1, (i - 14) / 6);
        html += `<path d="M${xAt(i) + 1} 282v${major ? 17 : 10}" stroke="#777" stroke-width="${major ? 3 : 2}" opacity="${opacity}"/>`;
    }
    html += '<text class="axis-label" x="5" y="334">20250711</text>';
    html += '<text class="axis-label" x="330" y="334" text-anchor="middle">20250819</text>';
    html += '<text class="axis-label" x="715" y="334" text-anchor="end">20251010</text>';
    document.getElementById('volume').innerHTML = html;
}

function drawChips() {
    let html = '<rect x="1" y="1" width="365" height="769" fill="none" stroke="#ccc" stroke-width="2"/>';
    chips.forEach((w, i) => {
        if (w) {
            html += `<rect x="0" y="${(i * 6.19 + 0.5).toFixed(1)}" width="${w}" height="3" fill="#c85050"/>`;
        }
    });
    document.getElementById('chips').innerHTML = html;
}

drawKline();
drawVolume();
drawChips();
```
